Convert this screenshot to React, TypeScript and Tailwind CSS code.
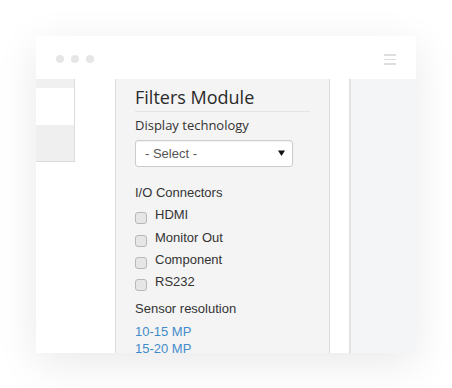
import React from "react";

const arial = { fontFamily: '"Liberation Sans", Arial, sans-serif' };
const open = { fontFamily: '"Open Sans", "Noto Sans", sans-serif' };

function Check({ label }: { label: string }) {
  return (
    <div className="flex h-[22.4px] items-start leading-[22.4px] text-[13px] text-[#333]" style={arial}>
      <div className="mt-[8px] h-[12px] w-[12px] shrink-0 rounded-[3px] border border-[#b8b8b8] bg-[#e6e6e6]" />
      <span className="ml-[8px]">{label}</span>
    </div>
  );
}

export default function App() {
  return (
    <div className="h-[388px] w-[452px] overflow-hidden bg-white pl-[36px] pt-[36px]">
      <div className="flex h-[317px] w-[380px] flex-col bg-white shadow-[0_10px_40px_rgba(0,0,0,0.09)]">
        {/* title bar */}
        <div className="flex h-[43px] shrink-0 items-center justify-between pl-[20px] pr-[20px] pt-[3px]">
          <div className="flex gap-[7px]">
            <div className="h-[8px] w-[8px] rounded-full bg-[#e6e6e6]" />
            <div className="h-[8px] w-[8px] rounded-full bg-[#e6e6e6]" />
            <div className="h-[8px] w-[8px] rounded-full bg-[#e6e6e6]" />
          </div>
          <div className="flex w-[12px] flex-col gap-[3px] pt-[1px]">
            <div className="h-[1.5px] bg-[#dedede]" />
            <div className="h-[1.5px] bg-[#dedede]" />
            <div className="h-[1.5px] bg-[#dedede]" />
          </div>
        </div>
        {/* body */}
        <div className="flex h-[274px] overflow-hidden">
          <div className="w-[39px] shrink-0">
            <div className="h-[83px] border-b border-r border-[#dcdcdc]">
              <div className="h-[9px] bg-[#f0f0f0]" />
              <div className="h-[37px] bg-white" />
              <div className="h-[36px] bg-[#efefef]" />
            </div>
          </div>
          <div className="w-[40px] shrink-0" />
          <div className="w-[215px] shrink-0 border-l border-r border-[#dddddd] bg-[#f4f4f4] pl-[19px] pr-[19px] pt-[5.5px]">
            <div className="border-b border-[#e4e4e4] pb-[2.5px] text-[18px] leading-[24px] text-[#2a2a2a]" style={open}>
              Filters Module
            </div>
            <div className="mt-[3.6px] text-[13px] leading-[18px] text-[#333]" style={open}>
              Display technology
            </div>
            <div className="mt-[6.4px] flex h-[27px] w-[158px] items-center justify-between rounded-[3px] border border-[#cccccc] bg-white pl-[9px] pr-[7px] text-[13px] text-[#555] shadow-[inset_0_1px_1px_rgba(0,0,0,0.05)]" style={arial}>
              <span>- Select -</span>
              <svg width="7" height="6" viewBox="0 0 7 6">
                <path d="M0 0.5 L7 0.5 L3.5 6 Z" fill="#111" />
              </svg>
            </div>
            <div className="mt-[17.2px] text-[13px] leading-[18px] text-[#333]" style={arial}>
              I/O Connectors
            </div>
            <div className="mt-[2.1px]">
              <Check label="HDMI" />
              <Check label="Monitor Out" />
              <Check label="Component" />
              <Check label="RS232" />
            </div>
            <div className="mt-[6.6px] text-[13px] leading-[18px] text-[#333]" style={arial}>
              Sensor resolution
            </div>
            <div className="mt-[4.2px] text-[13px] leading-[17.5px] text-[#428bca]" style={arial}>
              <div>10-15 MP</div>
              <div>15-20 MP</div>
            </div>
          </div>
          <div className="w-[19px] shrink-0" />
          <div className="flex-1 border-l-2 border-[#e2e2e2] bg-[#f4f5f7]" />
        </div>
      </div>
    </div>
  );
}
